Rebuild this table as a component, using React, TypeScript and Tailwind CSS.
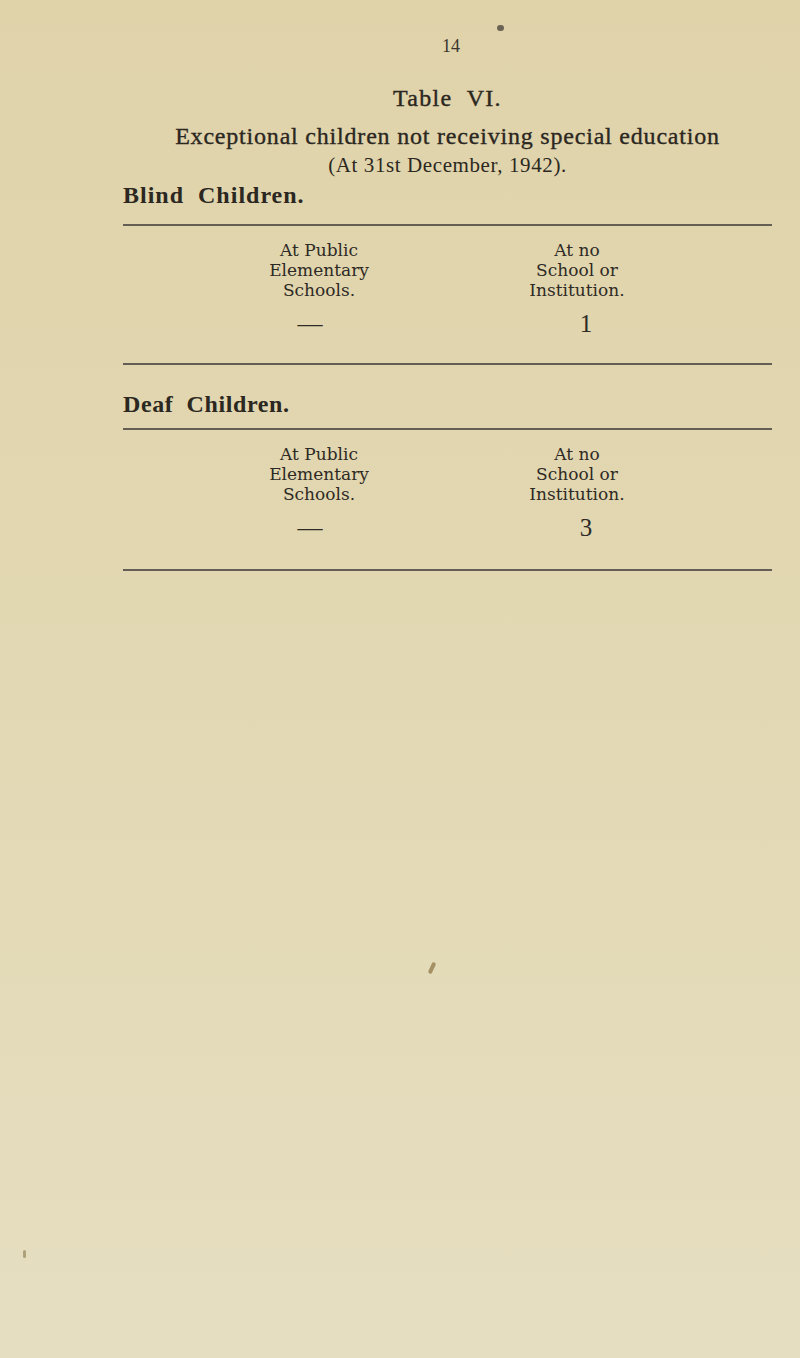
import React from "react";

const serif = { fontFamily: '"Liberation Serif", "Times New Roman", serif' };
const dejavu = { fontFamily: '"DejaVu Serif", serif' };

function Section({ value, gap }: { value: string; gap: string }) {
  return (
    <div className="text-[#2e2a25]">
      <div className="flex pt-[14px] text-[17px] leading-[20px]" style={dejavu}>
        <div className="w-[220px] ml-[86px] text-center">At Public<br />Elementary<br />Schools.</div>
        <div className="w-[160px] ml-[68px] text-center">At no<br />School or<br />Institution.</div>
      </div>
      <div className="flex mt-[10px] text-[25px] leading-[28px]" style={serif}>
        <div className="w-[220px] ml-[86px] text-center pr-[18px]">—</div>
        <div className="w-[160px] ml-[68px] text-center pl-[18px]">{value}</div>
      </div>
      <div className={gap} />
    </div>
  );
}

function Rule() {
  return <div className="h-[2px] bg-[#57514a] opacity-90" />;
}

export default function App() {
  return (
    <div className="relative w-[800px] h-[1358px] overflow-hidden bg-gradient-to-b from-[#e0d3aa] via-[#e2d8b3] to-[#e6dec1] text-[#2b2721]" style={serif}>
      <div className="absolute left-[497px] top-[25px] w-[7px] h-[6px] rounded-full bg-[#4e4740] opacity-80" />
      <div className="absolute left-[430px] top-[962px] w-[4px] h-[12px] rotate-[25deg] rounded-full bg-[#8a7040] opacity-70" />
      <div className="absolute left-[23px] top-[1250px] w-[3px] h-[8px] rounded-full bg-[#8a7850] opacity-60" />
      <div className="pl-[123px] pr-[28px] pt-[36px]">
        <div className="text-center text-[18px] leading-[20px] pl-[7px] text-[#3a352e]">14</div>
        <div className="text-center text-[24px] leading-[28px] mt-[28px] tracking-[1.3px] [-webkit-text-stroke:0.4px_#2b2721]">Table&nbsp; VI.</div>
        <div className="text-center text-[24px] leading-[28px] mt-[10px] tracking-[0.8px] whitespace-nowrap [-webkit-text-stroke:0.35px_#2b2721]">Exceptional children not receiving special education</div>
        <div className="text-center text-[21px] leading-[24px] mt-[3px] tracking-[0.6px]">(At 31st December, 1942).</div>
        <div className="text-[24px] leading-[28px] font-bold mt-[4px] tracking-[1px]">Blind&nbsp; Children.</div>
        <div className="mt-[15px]"><Rule /></div>
        <Section value="1" gap="h-[25px]" />
        <Rule />
        <div className="text-[24px] leading-[28px] font-bold mt-[25px] tracking-[0.6px]">Deaf&nbsp; Children.</div>
        <div className="mt-[10px]"><Rule /></div>
        <Section value="3" gap="h-[27px]" />
        <Rule />
      </div>
    </div>
  );
}
